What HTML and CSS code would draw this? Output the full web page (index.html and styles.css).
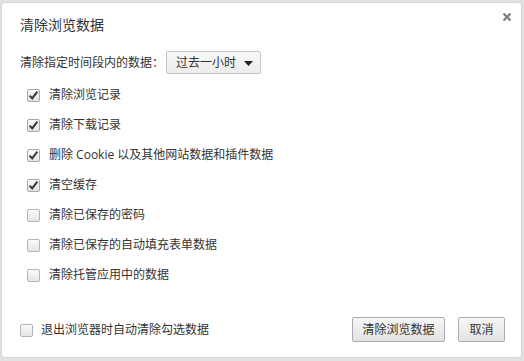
FILE: index.html
```html
<!DOCTYPE html>
<html lang="zh-CN">
<head>
<meta charset="utf-8">
<title>清除浏览数据</title>
<link rel="stylesheet" href="styles.css">
</head>
<body>
<div class="dialog">
  <button class="close" aria-label="关闭">
    <svg width="10" height="10" viewBox="0 0 10 10"><path d="M1.5 1.5 L8.5 8.5 M8.5 1.5 L1.5 8.5" stroke="#7a7a7a" stroke-width="2.2" stroke-linecap="butt"/></svg>
  </button>
  <div class="title">清除浏览数据</div>
  <div class="time-row">
    <span class="time-label">清除指定时间段内的数据：</span>
    <div class="select">
      <span>过去一小时</span>
      <svg class="arrow" width="9" height="5" viewBox="0 0 9 5"><path d="M0 0 H9 L4.5 5 Z" fill="#222"/></svg>
    </div>
  </div>
  <ul class="options">
    <li class="option"><span class="cb checked"><svg width="13" height="13" viewBox="0 0 13 13"><path d="M2.6 6.6 L5.2 9.4 L10.4 2.6" fill="none" stroke="#3a3a3a" stroke-width="2.1"/></svg></span><span>清除浏览记录</span></li>
    <li class="option"><span class="cb checked"><svg width="13" height="13" viewBox="0 0 13 13"><path d="M2.6 6.6 L5.2 9.4 L10.4 2.6" fill="none" stroke="#3a3a3a" stroke-width="2.1"/></svg></span><span>清除下载记录</span></li>
    <li class="option"><span class="cb checked"><svg width="13" height="13" viewBox="0 0 13 13"><path d="M2.6 6.6 L5.2 9.4 L10.4 2.6" fill="none" stroke="#3a3a3a" stroke-width="2.1"/></svg></span><span>删除 Cookie 以及其他网站数据和插件数据</span></li>
    <li class="option"><span class="cb checked"><svg width="13" height="13" viewBox="0 0 13 13"><path d="M2.6 6.6 L5.2 9.4 L10.4 2.6" fill="none" stroke="#3a3a3a" stroke-width="2.1"/></svg></span><span>清空缓存</span></li>
    <li class="option"><span class="cb"></span><span>清除已保存的密码</span></li>
    <li class="option"><span class="cb"></span><span>清除已保存的自动填充表单数据</span></li>
    <li class="option"><span class="cb"></span><span>清除托管应用中的数据</span></li>
  </ul>
  <div class="footer">
    <label class="footer-check"><span class="cb"></span><span>退出浏览器时自动清除勾选数据</span></label>
    <div class="buttons">
      <button class="btn btn-wide">清除浏览数据</button>
      <button class="btn btn-small">取消</button>
    </div>
  </div>
</div>
</body>
</html>
```

FILE: styles.css
```css
html, body {
  margin: 0;
  padding: 0;
}
body {
  width: 524px;
  height: 361px;
  background: #e2e2e2;
  font-family: "Open Sans", "Noto Sans CJK SC", sans-serif;
  font-size: 12px;
  color: #333;
  overflow: hidden;
}
.dialog {
  position: relative;
  box-sizing: border-box;
  margin: 3px 0 0 2px;
  width: 519px;
  height: 354px;
  background: #fff;
  border-radius: 3px;
  box-shadow: 0 0 2px rgba(0,0,0,0.18);
  padding: 0 16px 15px 18px;
  display: flex;
  flex-direction: column;
}
.close {
  position: absolute;
  top: 9px;
  right: 9px;
  width: 10px;
  height: 10px;
  padding: 0;
  border: 0;
  background: none;
  display: flex;
}
.title {
  font-size: 14px;
  line-height: 20px;
  padding-top: 12px;
  height: 32px;
  color: #333;
}
.time-row {
  margin-top: 4px;
  display: flex;
  align-items: center;
  height: 23px;
}
.time-label {
  line-height: 16px;
}
.select {
  box-sizing: border-box;
  margin-left: 2px;
  width: 95px;
  height: 23px;
  border: 1px solid #c6c6c6;
  border-radius: 2px;
  background: linear-gradient(#f8f8f8, #ececec);
  display: flex;
  align-items: center;
  justify-content: space-between;
  padding: 0 7px 0 9px;
  line-height: 16px;
}
.arrow {
  margin-top: 1px;
}
.options {
  list-style: none;
  margin: 6px 0 0 0;
  padding: 0 0 0 7px;
}
.option {
  height: 30px;
  display: flex;
  align-items: center;
  gap: 9px;
  line-height: 16px;
}
.cb {
  box-sizing: border-box;
  width: 13px;
  height: 13px;
  flex: none;
  border: 1px solid #b4b4b4;
  border-radius: 2px;
  background: linear-gradient(#fbfbfb, #e4e4e4);
  display: flex;
  position: relative;
}
.cb svg {
  position: absolute;
  left: -1px;
  top: -1px;
}
.cb.checked {
  border-color: #a8a8a8;
}
.footer {
  margin-top: auto;
  display: flex;
  align-items: center;
  justify-content: space-between;
  height: 25px;
}
.footer-check {
  display: flex;
  align-items: center;
  gap: 8px;
  line-height: 16px;
  padding-top: 1px;
}
.buttons {
  display: flex;
  gap: 13px;
}
.btn {
  box-sizing: border-box;
  height: 25px;
  padding: 0;
  border: 1px solid #acacac;
  border-radius: 2px;
  background: linear-gradient(#f6f6f6, #e3e3e3);
  font-family: "Open Sans", "Noto Sans CJK SC", sans-serif;
  font-size: 12px;
  color: #333;
  line-height: 16px;
}
.btn-wide {
  width: 93px;
}
.btn-small {
  width: 47px;
}
```
